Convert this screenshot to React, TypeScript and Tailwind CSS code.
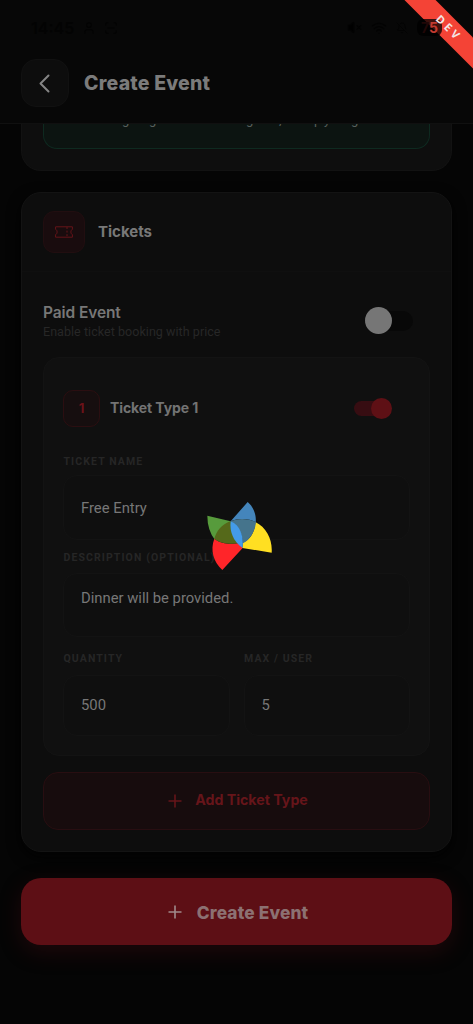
import type { ReactNode } from "react";
import { BellOff, ScanLine, User, VolumeX, Wifi } from "lucide-react";
import { clsx } from "clsx";

const heading = "font-['Inter',sans-serif]";

const StatusBar = () => {
  return (
    <div className="flex h-[55px] items-center justify-between pl-[31px] pr-[31px] text-[#030303]">
      <div className="flex items-center gap-2">
        <span className={clsx(heading, "text-[16px] font-semibold")}>14:45</span>
        <User size={14} />
        <ScanLine size={14} />
      </div>
      <div className="flex items-center gap-[9px]">
        <VolumeX size={15} fill="black" />
        <Wifi size={16} />
        <BellOff size={12} />
        <span className="relative z-20 flex h-[17px] w-[25px] items-center justify-center rounded-[6px] bg-black/75 font-['Inter',sans-serif] text-[14px] font-bold leading-none text-[#200707]">
          7<span className="text-[#c23a30]">5</span>
        </span>
      </div>
    </div>
  );
};

const DevBanner = () => {
  return (
    <div className="pointer-events-none absolute right-0 top-0 z-10 h-[80px] w-[80px] overflow-hidden">
      <div className="absolute -right-[44px] top-[16px] h-[22px] w-[140px] rotate-45 bg-[#f44336]" />
    </div>
  );
};

const DevLabel = () => {
  return (
    <div className="absolute right-[5px] top-[16px] z-30 flex h-[22px] w-[40px] rotate-45 items-center justify-center pl-[3px] font-['Noto_Sans',sans-serif] text-[11px] font-bold tracking-[3.4px] text-[#f3e6e6]">
      DEV
    </div>
  );
};

const PlusIcon = ({ className }: { className?: string }) => {
  return (
    <svg width="14" height="14" viewBox="0 0 14 14" fill="none" stroke="currentColor" strokeWidth="1.6" className={className}>
      <path d="M7 0.5V13.5M0.5 7H13.5" />
    </svg>
  );
};

const TicketIcon = () => {
  return (
    <svg width="18" height="12" viewBox="0 0 18 12" fill="none" stroke="currentColor" strokeWidth="1">
      <path d="M0.6 0.8H17.4V3.4C15.4 3.9 15.4 8.1 17.4 8.6V11.2H0.6V8.6C2.6 8.1 2.6 3.9 0.6 3.4Z" />
      <path d="M12 1V11" strokeDasharray="2 1.6" />
    </svg>
  );
};

const Field = ({ label, className, children }: { label: string; className: string; children: ReactNode }) => {
  return (
    <div className="flex-1">
      <p className="h-[14px] pl-[0.5px] font-['Roboto',sans-serif] text-[10.5px] font-bold leading-[14px] tracking-[1.1px] text-[#262626]">
        {label}
      </p>
      <div
        className={clsx(
          "flex rounded-[14px] border border-[#131313] bg-[#0f0f0f] px-[17px] font-['Roboto',sans-serif] text-[14.8px] leading-[18px] text-[#777]",
          className
        )}
      >
        {children}
      </div>
    </div>
  );
};

const Loader = () => {
  return (
    <div className="absolute left-[206px] top-[501px] z-40">
      <svg width="67" height="71" viewBox="48 33 201 213">
        <path fill="#579b3c" d="M52 77L122 94Q94 108 75 150Q52 120 52 77Z" />
        <path fill="#ff2529" d="M73 146C95 163 125 163 147 159L158 174L97 240C70 215 60 180 73 146Z" />
        <path fill="#ffdf22" d="M196 96C230 112 248 150 245 188L157 174L159 157C180 150 195 125 196 96Z" />
        <path fill="#4485bb" d="M173 36L122 94C145 85 175 84 197 97C200 75 190 50 173 36Z" />
        <path fill="#55691a" d="M124 93C95 102 78 125 73 147C95 163 125 163 148 160C132 145 122 118 124 93Z" />
        <path fill="#45748c" d="M121 95C140 84 175 84 198 97C195 125 180 150 159 160C158 135 145 105 121 95Z" />
        <path fill="#449be8" d="M122 94C150 105 162 140 158 174C130 155 118 125 122 94Z" />
      </svg>
    </div>
  );
};

const App = () => {
  return (
    <div className="relative flex h-[1024px] w-[473px] flex-col overflow-hidden bg-[#050505]">
      <header className="h-[124px] shrink-0 border-b border-[#101010] bg-[#070707]">
        <StatusBar />
        <div className="mt-1 flex items-center gap-[15px] pl-[21px]">
          <button className="flex h-12 w-12 items-center justify-center rounded-[15px] border border-[#111] bg-[#0d0d0d] text-[#858585]">
            <svg width="12" height="19" viewBox="0 0 12 19" fill="none" stroke="currentColor" strokeWidth="2" strokeLinecap="round" strokeLinejoin="round">
              <path d="M9.5 1.5L1.5 9.5L9.5 17.5" />
            </svg>
          </button>
          <h1 className={clsx(heading, "pt-[2px] text-[19.5px] font-extrabold tracking-[0.2px] text-[#7b7b7b]")}>Create Event</h1>
        </div>
      </header>

      <main className="flex flex-col px-[21px]">
        {/* end of the previous section, scrolled under the header */}
        <section className="h-[47px] rounded-b-[20px] border border-t-0 border-[#121212] bg-[#0e0e0e] px-[21px]">
          <div className="relative h-[25px] overflow-hidden rounded-b-[14px] border border-t-0 border-[#0e2a20] bg-[#0c1411]">
            <p className="-mt-[11px] flex pl-[78px] font-['Roboto',sans-serif] text-[13px] leading-[14px] text-[#58605d]">
              <span className="w-[27px]">g</span>
              <span className="w-[97px]">g</span>
              <span className="w-[33px]">g</span>
              <span className="w-[35px]">,</span>
              <span className="w-[10px]">p</span>
              <span className="w-[27px]">y</span>
              <span>g</span>
            </p>
          </div>
        </section>

        <section className="mt-[21px] flex h-[660px] flex-col rounded-[20px] border border-[#131313] bg-[#0d0d0d] shadow-[0_5px_14px_#020202]">
          <div className="flex h-[79px] shrink-0 items-center gap-[13px] border-b border-[#0f0f0f] px-[21px]">
            <div className="flex h-[42px] w-[42px] items-center justify-center rounded-[11px] border border-[#210e10] bg-[#190c0e] text-[#651419]">
              <TicketIcon />
            </div>
            <h2 className={clsx(heading, "pt-px text-[15px] font-bold text-[#787878]")}>Tickets</h2>
          </div>

          <div className="mx-[21px] mt-[31px] flex h-[37px] items-start justify-between">
            <div>
              <h3 className={clsx(heading, "text-[15.5px] font-semibold leading-[19px] tracking-[-0.1px] text-[#777]")}>Paid Event</h3>
              <p className="mt-px font-['Roboto',sans-serif] text-[12.5px] leading-[18px] tracking-[0.05px] text-[#272727]">
                Enable ticket booking with price
              </p>
            </div>
            <div className="mr-[17px] mt-[4px] flex h-[27px] w-[48px] items-center">
              <div className="z-10 h-[27px] w-[27px] shrink-0 rounded-full bg-[#767676]" />
              <div className="-ml-[18px] h-[20px] w-[39px] shrink-0 rounded-full bg-[#080808]" />
            </div>
          </div>

          <div className="mx-[21px] mt-[17px] h-[399px] rounded-[16px] border border-[#131313] bg-[#101010] px-[19px] pt-[32px]">
            <div className="flex h-[37px] items-center">
              <div
                className={clsx(
                  heading,
                  "flex h-[37px] w-[37px] items-center justify-center rounded-[10px] border border-[#2b0e11] bg-[#160e0f] text-[13px] font-bold text-[#6b1219]"
                )}
              >
                1
              </div>
              <h3 className={clsx(heading, "-mt-[2px] ml-[10px] text-[14px] font-bold tracking-[-0.1px] text-[#737373]")}>Ticket Type 1</h3>
              <div className="ml-auto mr-[18px] flex items-center">
                <div className="h-[15px] w-[34px] rounded-full bg-[#370d12]" />
                <div className="-ml-[17px] h-[21px] w-[21px] rounded-full bg-[#5e1015]" />
              </div>
            </div>

            <div className="mt-[28px] flex flex-col gap-[11px]">
              <Field label="TICKET NAME" className="mt-[6px] h-[65px] items-center">
                Free Entry
              </Field>
              <Field label="DESCRIPTION (OPTIONAL)" className="mt-[8px] h-[64px] items-start pt-[15px]">
                Dinner will be provided.
              </Field>
            </div>
            <div className="mt-[15px] flex gap-[14px]">
              <Field label="QUANTITY" className="mt-[9px] h-[61px] items-center pb-px">
                500
              </Field>
              <Field label="MAX / USER" className="mt-[9px] h-[61px] items-center pb-px">
                5
              </Field>
            </div>
          </div>

          <button
            className={clsx(
              heading,
              "mx-[21px] mt-[16px] flex h-[58px] items-center justify-center gap-[13px] rounded-[15px] border border-[#280e11] bg-[#170c0d] pb-[2px] pl-[3px] text-[14.2px] font-bold text-[#66151a]"
            )}
          >
            <PlusIcon className="mt-[2px]" />
            Add Ticket Type
          </button>
        </section>

        <button
          className={clsx(
            heading,
            "mt-[26px] flex h-[67px] items-center justify-center gap-[15px] rounded-[20px] bg-[#5d0f15] pl-[3px] text-[17.3px] font-extrabold tracking-[0.15px] text-[#8c7172] shadow-[0_7px_22px_#5d0f1548]"
          )}
        >
          <PlusIcon className="text-[#a08a8b]" />
          <span className="pt-[2px]">Create Event</span>
        </button>
      </main>

      <DevBanner />
      <DevLabel />
      <Loader />
    </div>
  );
};

export default App;
